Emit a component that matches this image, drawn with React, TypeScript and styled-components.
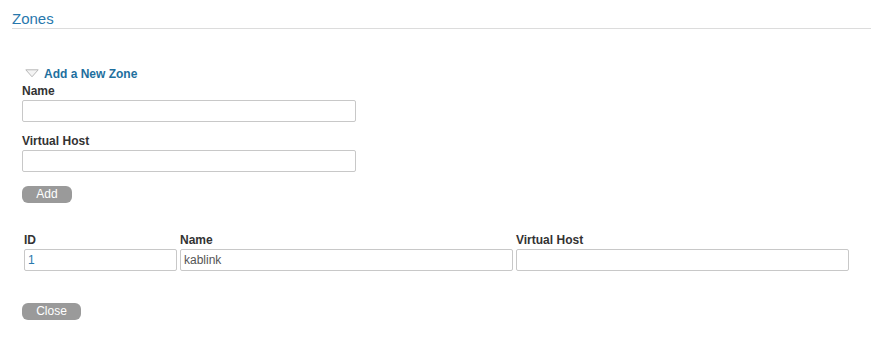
import React from "react";
import styled, { createGlobalStyle } from "styled-components";

const GlobalStyle = createGlobalStyle`
  body {
    margin: 0;
    background: #ffffff;
    font-family: "Liberation Sans", Arial, sans-serif;
  }
`;

const zones = [{ id: "1", name: "kablink", virtualHost: "" }];

export default function App() {
  return (
    <>
      <GlobalStyle />
      <Page>
        <Title>Zones</Title>
        <Body>
          <Toggle>
            <svg width="14" height="9" viewBox="0 0 14 9">
              <path d="M0.8 0.8 L13.2 0.8 L7 7.8 Z" fill="#f4f4f4" stroke="#b8b8b8" strokeWidth="1" />
            </svg>
            <span>Add a New Zone</span>
          </Toggle>
          <Field>
            <Label>Name</Label>
            <TextInput $width={334} />
          </Field>
          <Field>
            <Label>Virtual Host</Label>
            <TextInput $width={334} />
          </Field>
          <PillButton $width={50}>Add</PillButton>

          <ZoneTable>
            <thead>
              <tr>
                <Th $width={156}>ID</Th>
                <Th $width={336}>Name</Th>
                <Th $width={336}>Virtual Host</Th>
              </tr>
            </thead>
            <tbody>
              {zones.map((z) => (
                <tr key={z.id}>
                  <Td>
                    <CellInput $width={153} $blue defaultValue={z.id} />
                  </Td>
                  <Td>
                    <CellInput $width={333} defaultValue={z.name} />
                  </Td>
                  <Td>
                    <CellInput $width={333} defaultValue={z.virtualHost} />
                  </Td>
                </tr>
              ))}
            </tbody>
          </ZoneTable>
          <PillButton $width={59}>Close</PillButton>
        </Body>
      </Page>
    </>
  );
}

const Page = styled.div`
  padding-left: 12px;
`;

const Title = styled.h1`
  margin: 0;
  padding-top: 10px;
  height: 18px;
  font-size: 15px;
  font-weight: 400;
  line-height: 18px;
  color: #2878ad;
  border-bottom: 1px solid #dcdcdc;
`;

const Body = styled.div`
  display: flex;
  flex-direction: column;
  align-items: flex-start;
  padding: 37px 0 0 10px;
`;

const Toggle = styled.div`
  display: flex;
  align-items: center;
  gap: 5px;
  padding-left: 3px;
  height: 16px;
  margin-bottom: 2px;
  font-size: 12px;
  font-weight: 700;
  color: #1e6f9e;

  svg {
    margin-top: -2px;
  }
`;

const Field = styled.div`
  display: flex;
  flex-direction: column;
  margin-bottom: 12px;
`;

const Label = styled.label`
  font-size: 12px;
  font-weight: 700;
  line-height: 15px;
  color: #333333;
  margin-bottom: 1px;
`;

const TextInput = styled.input<{ $width: number }>`
  box-sizing: border-box;
  width: ${(p) => p.$width}px;
  height: 22px;
  margin: 0;
  padding: 2px 4px;
  border: 1px solid #c8c8c8;
  border-radius: 2px;
  font-family: "Liberation Sans", Arial, sans-serif;
  font-size: 12px;
`;

const PillButton = styled.button<{ $width: number }>`
  display: block;
  width: ${(p) => p.$width}px;
  height: 17px;
  margin: 2px 0 0;
  padding: 0;
  border: none;
  border-radius: 6px;
  background: #9a9a9a;
  color: #ffffff;
  font-family: "Liberation Sans", Arial, sans-serif;
  font-size: 12px;
  line-height: 17px;
`;

const ZoneTable = styled.table`
  border-collapse: collapse;
  margin: 30px 0 30px 2px;
`;

const Th = styled.th<{ $width: number }>`
  width: ${(p) => p.$width}px;
  padding: 0 0 1px;
  text-align: left;
  font-size: 12px;
  font-weight: 700;
  line-height: 15px;
  color: #333333;
`;

const Td = styled.td`
  padding: 0;
`;

const CellInput = styled.input<{ $width: number; $blue?: boolean }>`
  box-sizing: border-box;
  width: ${(p) => p.$width}px;
  height: 22px;
  margin: 0;
  padding: 2px 3px;
  border: 1px solid #c8c8c8;
  border-radius: 2px;
  font-family: "Liberation Sans", Arial, sans-serif;
  font-size: 12px;
  color: ${(p) => (p.$blue ? "#2878ad" : "#555555")};
`;
